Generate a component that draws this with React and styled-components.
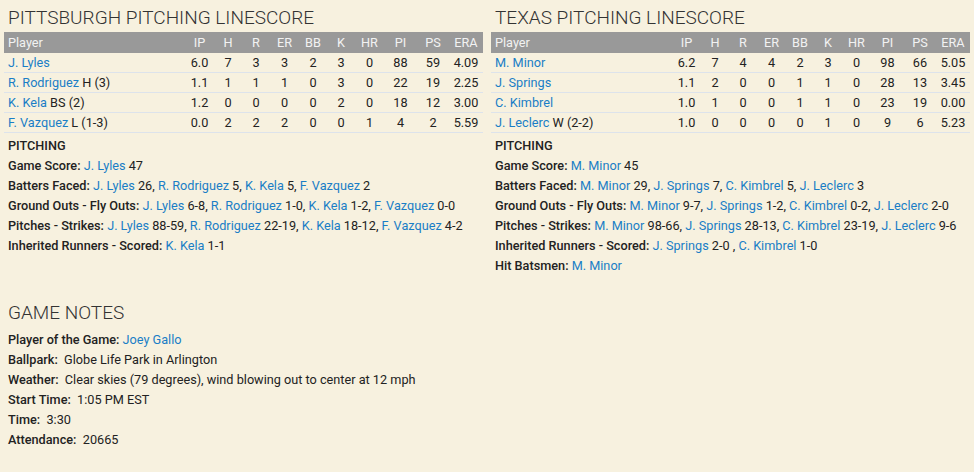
import React from "react";
import styled, { createGlobalStyle } from "styled-components";

const GlobalStyle = createGlobalStyle`
  html, body {
    margin: 0;
    padding: 0;
    background: #f7f1df;
  }
  body {
    font-family: Roboto, "Liberation Sans", sans-serif;
    font-size: 12.7px;
    color: #222;
  }
`;

const STAT_COLS = "181px 29px 28px 28px 29px 28px 28px 29px 33px 32px 1fr";

const teams = [
  {
    title: "PITTSBURGH PITCHING LINESCORE",
    pitchers: [
      { name: "J. Lyles", note: "", stats: ["6.0", "7", "3", "3", "2", "3", "0", "88", "59", "4.09"] },
      { name: "R. Rodriguez", note: "H (3)", stats: ["1.1", "1", "1", "1", "0", "3", "0", "22", "19", "2.25"] },
      { name: "K. Kela", note: "BS (2)", stats: ["1.2", "0", "0", "0", "0", "2", "0", "18", "12", "3.00"] },
      { name: "F. Vazquez", note: "L (1-3)", stats: ["0.0", "2", "2", "2", "0", "0", "1", "4", "2", "5.59"] },
    ],
    notes: [
      { label: "Game Score:", items: [["J. Lyles", "47"]] },
      {
        label: "Batters Faced:",
        items: [["J. Lyles", "26,"], ["R. Rodriguez", "5,"], ["K. Kela", "5,"], ["F. Vazquez", "2"]],
      },
      {
        label: "Ground Outs - Fly Outs:",
        items: [["J. Lyles", "6-8,"], ["R. Rodriguez", "1-0,"], ["K. Kela", "1-2,"], ["F. Vazquez", "0-0"]],
      },
      {
        label: "Pitches - Strikes:",
        items: [["J. Lyles", "88-59,"], ["R. Rodriguez", "22-19,"], ["K. Kela", "18-12,"], ["F. Vazquez", "4-2"]],
      },
      { label: "Inherited Runners - Scored:", items: [["K. Kela", "1-1"]] },
    ],
  },
  {
    title: "TEXAS PITCHING LINESCORE",
    pitchers: [
      { name: "M. Minor", note: "", stats: ["6.2", "7", "4", "4", "2", "3", "0", "98", "66", "5.05"] },
      { name: "J. Springs", note: "", stats: ["1.1", "2", "0", "0", "1", "1", "0", "28", "13", "3.45"] },
      { name: "C. Kimbrel", note: "", stats: ["1.0", "1", "0", "0", "1", "1", "0", "23", "19", "0.00"] },
      { name: "J. Leclerc", note: "W (2-2)", stats: ["1.0", "0", "0", "0", "0", "1", "0", "9", "6", "5.23"] },
    ],
    notes: [
      { label: "Game Score:", items: [["M. Minor", "45"]] },
      {
        label: "Batters Faced:",
        items: [["M. Minor", "29,"], ["J. Springs", "7,"], ["C. Kimbrel", "5,"], ["J. Leclerc", "3"]],
      },
      {
        label: "Ground Outs - Fly Outs:",
        items: [["M. Minor", "9-7,"], ["J. Springs", "1-2,"], ["C. Kimbrel", "0-2,"], ["J. Leclerc", "2-0"]],
      },
      {
        label: "Pitches - Strikes:",
        items: [["M. Minor", "98-66,"], ["J. Springs", "28-13,"], ["C. Kimbrel", "23-19,"], ["J. Leclerc", "9-6"]],
      },
      { label: "Inherited Runners - Scored:", items: [["J. Springs", "2-0 ,"], ["C. Kimbrel", "1-0"]] },
      { label: "Hit Batsmen:", items: [["M. Minor", ""]] },
    ],
  },
];

const headers = ["IP", "H", "R", "ER", "BB", "K", "HR", "PI", "PS", "ERA"];

const gameNotes = [
  { label: "Player of the Game:", link: "Joey Gallo" },
  { label: "Ballpark:", value: "Globe Life Park in Arlington" },
  { label: "Weather:", value: "Clear skies (79 degrees), wind blowing out to center at 12 mph" },
  { label: "Start Time:", value: "1:05 PM EST" },
  { label: "Time:", value: "3:30" },
  { label: "Attendance:", value: "20665" },
];

function LineScore({ team }) {
  return (
    <S.Panel>
      <S.Title>{team.title}</S.Title>
      <S.HeadRow>
        <S.Cell $left>Player</S.Cell>
        {headers.map((h) => (
          <S.Cell key={h}>{h}</S.Cell>
        ))}
      </S.HeadRow>
      {team.pitchers.map((p) => (
        <S.Row key={p.name}>
          <S.Cell $left>
            <S.Link>{p.name}</S.Link>
            {p.note && " " + p.note}
          </S.Cell>
          {p.stats.map((s, i) => (
            <S.Cell key={i}>{s}</S.Cell>
          ))}
        </S.Row>
      ))}
      <S.Notes>
        <S.Line>
          <S.Label>PITCHING</S.Label>
        </S.Line>
        {team.notes.map((n) => (
          <S.Line key={n.label}>
            <S.Label>{n.label}</S.Label>
            {n.items.map(([name, val], i) => (
              <React.Fragment key={i}>
                {" "}
                <S.Link>{name}</S.Link>
                {val && " " + val}
              </React.Fragment>
            ))}
          </S.Line>
        ))}
      </S.Notes>
    </S.Panel>
  );
}

export default function App() {
  return (
    <S.Page>
      <GlobalStyle />
      <S.Columns>
        {teams.map((t) => (
          <LineScore key={t.title} team={t} />
        ))}
      </S.Columns>
      <S.GameNotes>
        <S.Title>GAME NOTES</S.Title>
        <S.Notes>
          {gameNotes.map((n) => (
            <S.Line key={n.label}>
              <S.Label>{n.label}</S.Label>{" "}
              {n.link ? <S.Link>{n.link}</S.Link> : <span>&nbsp;{n.value}</span>}
            </S.Line>
          ))}
        </S.Notes>
      </S.GameNotes>
    </S.Page>
  );
}

const S = {
  Page: styled.div`
    padding: 4px 4px 20px;
  `,
  Columns: styled.div`
    display: grid;
    grid-template-columns: 1fr 1fr;
    column-gap: 8px;
    align-items: start;
  `,
  Panel: styled.section`
    min-width: 0;
  `,
  Title: styled.h2`
    margin: 0;
    padding-left: 4px;
    font-size: 19px;
    font-weight: 300;
    line-height: 28px;
    color: #333;
  `,
  HeadRow: styled.div`
    display: grid;
    grid-template-columns: ${STAT_COLS};
    height: 21px;
    align-items: center;
    background: #999999;
    color: #f2f2f2;
  `,
  Row: styled.div`
    display: grid;
    grid-template-columns: ${STAT_COLS};
    height: 19px;
    align-items: center;
    border-bottom: 1px solid #dde3eb;
  `,
  Cell: styled.div`
    text-align: ${(p) => (p.$left ? "left" : "center")};
    padding-left: ${(p) => (p.$left ? "4px" : "0")};
    white-space: nowrap;
  `,
  Link: styled.a`
    color: #1a7ec6;
    text-decoration: none;
    cursor: pointer;
  `,
  Notes: styled.div`
    padding: 3px 4px 0;
  `,
  Line: styled.div`
    line-height: 20px;
    white-space: nowrap;
  `,
  Label: styled.span`
    font-weight: 500;
    color: #222;
  `,
  GameNotes: styled.section`
    margin-top: 23px;
  `,
};
